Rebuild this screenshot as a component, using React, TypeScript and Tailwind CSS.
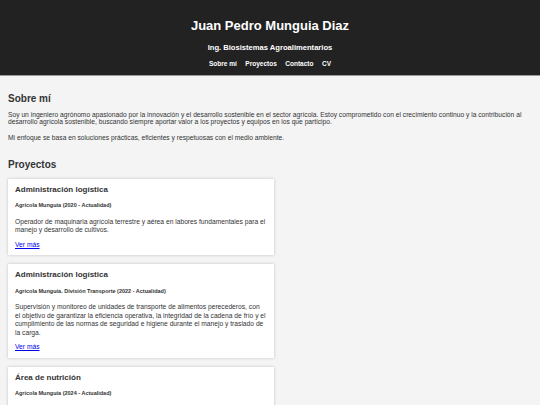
import React from 'react'

const PROJECTS = [
  {
    title: 'Administración logística',
    company: 'Agrícola Munguía (2020 - Actualidad)',
    description:
      'Operador de maquinaria agrícola terrestre y aérea en labores fundamentales para el manejo y desarrollo de cultivos.',
  },
  {
    title: 'Administración logística',
    company: 'Agrícola Munguía. División Transporte (2022 - Actualidad)',
    description:
      'Supervisión y monitoreo de unidades de transporte de alimentos perecederos, con el objetivo de garantizar la eficiencia operativa, la integridad de la cadena de frío y el cumplimiento de las normas de seguridad e higiene durante el manejo y traslado de la carga.',
  },
  {
    title: 'Área de nutrición',
    company: 'Agrícola Munguía (2024 - Actualidad)',
    description:
      'Elaboración y aplicación de programas de nutrición vegetal para mejorar el rendimiento y la calidad de los cultivos.',
  },
]

const NAV = ['Sobre mí', 'Proyectos', 'Contacto', 'CV']

export default function App() {
  return (
    <div
      className="min-h-screen bg-[#f4f4f4] text-[#333]"
      style={{ fontFamily: '"Liberation Sans", Arial, sans-serif' }}>
      <header className="flex flex-col items-center border-b border-[#9a9a9a] bg-[#222] pb-[7px] pt-[18px] text-white">
        <h1 className="text-[13px] font-bold leading-[16px]">Juan Pedro Munguia Diaz</h1>
        <p className="mt-[9px] text-[7.6px] font-bold leading-[9px]">
          Ing. Biosistemas Agroalimentarios
        </p>
        <nav className="mt-[8px] flex gap-[8.5px] text-[6.5px] font-bold leading-[8px]">
          {NAV.map((item) => (
            <a key={item} href="#">
              {item}
            </a>
          ))}
        </nav>
      </header>

      <main className="px-[8px] pt-[17px]">
        <section>
          <h2 className="text-[10px] font-bold leading-[12px]">Sobre mí</h2>
          <p className="mt-[5.5px] text-[6.7px] leading-[7px]">
            Soy un ingeniero agrónomo apasionado por la innovación y el desarrollo sostenible en el
            sector agrícola. Estoy comprometido con el crecimiento continuo y la contribución al
            desarrollo agrícola sostenible, buscando siempre aportar valor a los proyectos y equipos
            en los que participo.
          </p>
          <p className="mt-[9.5px] text-[6.7px] leading-[7px]">
            Mi enfoque se basa en soluciones prácticas, eficientes y respetuosas con el medio
            ambiente.
          </p>
        </section>

        <section className="mt-[18px]">
          <h2 className="text-[10px] font-bold leading-[12px]">Proyectos</h2>
          <div className="mt-[7.5px] flex flex-col gap-[9px]">
            {PROJECTS.map((project, index) => (
              <div
                key={index}
                className="w-[266px] bg-white pb-[6.5px] pl-[7px] pr-[7.5px] pt-[6px] shadow-[0_0_3px_rgba(0,0,0,0.2)]">
                <h3 className="text-[8px] font-bold leading-[10px]">{project.title}</h3>
                <p className="mt-[7.5px] text-[5.5px] font-bold leading-[7px]">{project.company}</p>
                <p className="mt-[8.5px] text-[6.7px] leading-[8.5px]">{project.description}</p>
                <a href="#" className="mt-[6px] block text-[6.7px] leading-[8px] text-[#0000ee] underline">
                  Ver más
                </a>
              </div>
            ))}
          </div>
        </section>
      </main>
    </div>
  )
}
